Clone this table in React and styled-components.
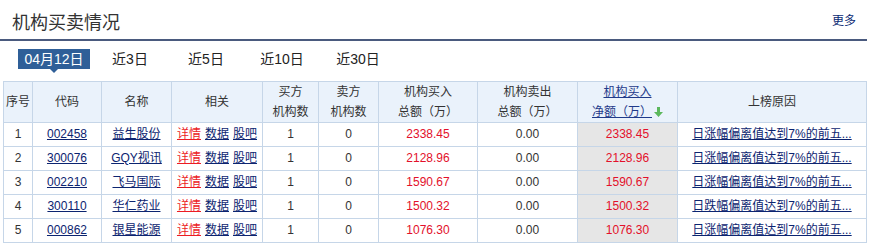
import React from 'react';
import styled, { createGlobalStyle } from 'styled-components';

const GlobalStyle = createGlobalStyle`
  body {
    margin: 0;
    background: #fff;
    font-family: "Liberation Sans", "Noto Sans CJK SC", sans-serif;
    font-size: 12px;
    color: #333;
  }
`;

const Wrap = styled.div`
  width: 867px;
`;

const TitleBar = styled.div`
  height: 39px;
  display: flex;
  align-items: center;
  justify-content: space-between;
  border-bottom: 2px solid #4a5a7e;
`;

const Title = styled.h2`
  margin: 3px 0 0 12px;
  font-size: 18px;
  font-weight: normal;
  color: #333;
`;

const More = styled.a`
  margin-right: 11px;
  font-size: 12px;
  color: #0c2b74;
  text-decoration: none;
`;

const Tabs = styled.div`
  display: grid;
  grid-template-columns: repeat(5, 76px);
  padding: 8px 0 0 16px;
  height: 32px;
`;

const Tab = styled.div`
  justify-self: center;
  position: relative;
  height: 20px;
  line-height: 20px;
  padding: 0 6px;
  font-size: 14px;
  color: ${(p) => (p.$active ? '#fff' : '#222')};
  background: ${(p) => (p.$active ? '#2f5f98' : 'transparent')};

  &::after {
    content: '';
    display: ${(p) => (p.$active ? 'block' : 'none')};
    position: absolute;
    left: 50%;
    bottom: -4px;
    margin-left: -4px;
    border-style: solid;
    border-width: 4px 4px 0 4px;
    border-color: #2f5f98 transparent transparent transparent;
  }
`;

const Table = styled.table`
  margin-left: 3px;
  width: 863px;
  border-collapse: collapse;
  table-layout: fixed;
`;

const Col = styled.col`
  width: ${(p) => p.$w}px;
`;

const Th = styled.th`
  height: 40px;
  padding: 0;
  background: #eaf2fb;
  border: 1px solid #c6d6e8;
  font-weight: normal;
  line-height: 20px;
  color: #333;
  text-align: center;
`;

const SortLink = styled.a`
  color: #1f3a8a;
  text-decoration: underline;
`;

const Td = styled.td`
  height: 23px;
  padding: 0;
  border: 1px solid #c6d6e8;
  text-align: center;
  line-height: 23px;
  white-space: nowrap;
  overflow: hidden;
  color: ${(p) => (p.$red ? '#e3102a' : '#333')};
  background: ${(p) => (p.$sorted ? '#e6e6e6' : 'transparent')};
`;

const Link = styled.a`
  color: ${(p) => (p.$red ? '#ec1c24' : '#0c2470')};
  text-decoration: underline;
  margin: 0 2px;
`;

const rows = [
  ['1', '002458', '益生股份', '1', '0', '2338.45', '0.00', '2338.45', '日涨幅偏离值达到7%的前五...'],
  ['2', '300076', 'GQY视讯', '1', '0', '2128.96', '0.00', '2128.96', '日涨幅偏离值达到7%的前五...'],
  ['3', '002210', '飞马国际', '1', '0', '1590.67', '0.00', '1590.67', '日涨幅偏离值达到7%的前五...'],
  ['4', '300110', '华仁药业', '1', '0', '1500.32', '0.00', '1500.32', '日跌幅偏离值达到7%的前五...'],
  ['5', '000862', '银星能源', '1', '0', '1076.30', '0.00', '1076.30', '日涨幅偏离值达到7%的前五...'],
];

const widths = [29, 69, 70, 91, 56, 60, 99, 100, 100, 189];

function DownArrow() {
  return (
    <svg width="9" height="10" viewBox="0 0 9 10" style={{ marginLeft: 2, verticalAlign: -1 }}>
      <path d="M3 0h3v5h3L4.5 10 0 5h3z" fill="#5cb85c" />
    </svg>
  );
}

export default function App() {
  return (
    <Wrap>
      <GlobalStyle />
      <TitleBar>
        <Title>机构买卖情况</Title>
        <More href="#">更多</More>
      </TitleBar>
      <Tabs>
        <Tab $active>04月12日</Tab>
        <Tab>近3日</Tab>
        <Tab>近5日</Tab>
        <Tab>近10日</Tab>
        <Tab>近30日</Tab>
      </Tabs>
      <Table>
        <colgroup>
          {widths.map((w, i) => <Col key={i} $w={w} />)}
        </colgroup>
        <thead>
          <tr>
            <Th>序号</Th>
            <Th>代码</Th>
            <Th>名称</Th>
            <Th>相关</Th>
            <Th>买方<br />机构数</Th>
            <Th>卖方<br />机构数</Th>
            <Th>机构买入<br />总额（万）</Th>
            <Th>机构卖出<br />总额（万）</Th>
            <Th>
              <SortLink href="#">机构买入</SortLink><br />
              <SortLink href="#">净额（万）</SortLink><DownArrow />
            </Th>
            <Th>上榜原因</Th>
          </tr>
        </thead>
        <tbody>
          {rows.map((r) => (
            <tr key={r[0]}>
              <Td>{r[0]}</Td>
              <Td><Link href="#">{r[1]}</Link></Td>
              <Td><Link href="#">{r[2]}</Link></Td>
              <Td>
                <Link href="#" $red>详情</Link>
                <Link href="#">数据</Link>
                <Link href="#">股吧</Link>
              </Td>
              <Td>{r[3]}</Td>
              <Td>{r[4]}</Td>
              <Td $red>{r[5]}</Td>
              <Td>{r[6]}</Td>
              <Td $red $sorted>{r[7]}</Td>
              <Td><Link href="#">{r[8]}</Link></Td>
            </tr>
          ))}
        </tbody>
      </Table>
    </Wrap>
  );
}
